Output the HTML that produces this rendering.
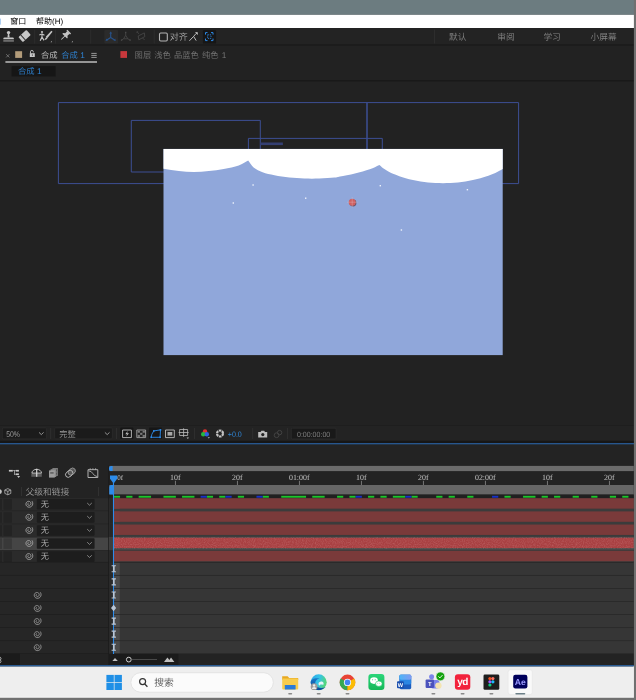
<!DOCTYPE html>
<html lang="zh-CN"><head><meta charset="utf-8"><title>After Effects</title>
<style>
html,body{margin:0;padding:0;background:#222;overflow:hidden}
svg{display:block;position:absolute;left:0;top:0;will-change:transform}
text{text-rendering:geometricPrecision;white-space:pre;font-weight:350}
</style></head><body>
<svg width="636" height="700" viewBox="0 0 636 700">
<rect x="0" y="0" width="636" height="700" fill="#222222" />
<rect x="0" y="0" width="636" height="14.8" fill="#6c7c80" />
<rect x="0" y="14.8" width="634" height="13.2" fill="#ffffff" />
<rect x="0" y="28" width="634" height="16.6" fill="#232323" />
<rect x="0" y="44.6" width="634" height="1" fill="#161616" />
<rect x="0" y="45.6" width="634" height="34.8" fill="#222222" />
<rect x="0" y="80.4" width="634" height="0.9" fill="#141414" />
<rect x="0" y="18.6" width="0.8" height="6" fill="#9cc4ee" />
<text x="10.3" y="24.3" font-size="8" fill="#000" font-family="'Liberation Sans','Noto Sans CJK SC',sans-serif" style="font-weight:400">窗口</text>
<text x="36" y="24.3" font-size="8" fill="#000" font-family="'Liberation Sans','Noto Sans CJK SC',sans-serif" style="font-weight:400">帮助(H)</text>
<text x="449" y="39.8" font-size="8.7" fill="#868686" font-family="'Liberation Sans','Noto Sans CJK SC',sans-serif" >默认</text>
<text x="497.2" y="39.8" font-size="8.7" fill="#868686" font-family="'Liberation Sans','Noto Sans CJK SC',sans-serif" >审阅</text>
<text x="543.4" y="39.8" font-size="8.7" fill="#868686" font-family="'Liberation Sans','Noto Sans CJK SC',sans-serif" >学习</text>
<text x="590.6" y="39.8" font-size="8.7" fill="#868686" font-family="'Liberation Sans','Noto Sans CJK SC',sans-serif" >小屏幕</text>
<rect x="434" y="29.5" width="0.7" height="14" fill="#333" />
<circle cx="8.55" cy="32.6" r="1.7" fill="#c6c6c6"/>
<path d="M7.95 33.6 h1.2 l0.5 3.9 h-2.2 z" fill="#c6c6c6" stroke="none" stroke-width="1" />
<path d="M3.3 39.3 v-0.6 a1.3 1.3 0 0 1 1.3 -1.3 h8 a1.3 1.3 0 0 1 1.3 1.3 v0.6 z" fill="#c6c6c6" stroke="none" stroke-width="1" />
<rect x="3.3" y="40.5" width="10.6" height="0.9" fill="#b4b4b4" />
<g transform="rotate(-42 24.6 36)"><rect x="19.2" y="32.6" width="10.8" height="6.8" rx="1" fill="#c6c6c6"/><rect x="22" y="32.2" width="0.9" height="7.6" fill="#232323"/></g>
<rect x="34.4" y="29.6" width="0.7" height="14" fill="#303030" />
<circle cx="42" cy="32" r="1.1" fill="#c6c6c6"/>
<path d="M39.4 35 l2.6 -1.2 l2.4 1.4 M42 33.4 v3.6 l-1.8 3.8 M42 37 l2 3.4" fill="none" stroke="#c6c6c6" stroke-width="1.15" />
<path d="M51.4 30.8 l1.1 1 l-5 6.2 l-1.7 -1.3 z" fill="#c6c6c6" stroke="none" stroke-width="1" />
<path d="M46.4 37 l1.2 1 c-0.8 1.6 -2.2 2 -3.4 1.8 c1 -0.6 1 -2 2.2 -2.8 z" fill="#c6c6c6" stroke="none" stroke-width="1" />
<path d="M50.4 42.3 h1.6 v-1.6 z" fill="#9a9a9a" stroke="none" stroke-width="1" />
<rect x="55.2" y="29.6" width="0.7" height="14" fill="#303030" />
<g transform="rotate(45 65.4 35.4)"><rect x="62.8" y="30" width="5.2" height="1.4" fill="#c6c6c6"/><rect x="63.7" y="31.2" width="3.4" height="3.4" fill="#c6c6c6"/><path d="M62 36.4 a3.4 2.2 0 0 1 6.8 0 z" fill="#c6c6c6"/><rect x="65" y="36.2" width="0.9" height="5" fill="#c6c6c6"/></g>
<path d="M71.4 42.3 h1.6 v-1.6 z" fill="#9a9a9a" stroke="none" stroke-width="1" />
<rect x="90.4" y="29.6" width="0.7" height="14" fill="#303030" />
<rect x="104.3" y="30" width="13.8" height="13.4" fill="#2b2b2b" rx="1"/>
<path d="M110.7 33 V37.5 L106.8 40 M110.7 37.5 L114.6 40" fill="none" stroke="#27528a" stroke-width="1.1" />
<path d="M110.7 31.6 l1.5 2 h-3 z M105.6 40.9 l0.6 -2.3 l1.7 2 z M115.8 40.9 l-0.6 -2.3 l-1.7 2 z" fill="#27528a" stroke="none" stroke-width="1" />
<path d="M125.7 32.6 V35.3 M123.6 38.8 L121.7 40 M127.8 38.8 L129.9 40 M125.7 35.3 L123.6 38.8 H127.8 Z" fill="none" stroke="#4a4a4a" stroke-width="0.8" />
<rect x="125" y="31.8" width="1.4" height="1.4" fill="#4a4a4a" />
<rect x="120.9" y="39.4" width="1.4" height="1.4" fill="#4a4a4a" />
<rect x="129.4" y="39.4" width="1.4" height="1.4" fill="#4a4a4a" />
<path d="M137.2 32 L139 33.8 M138.2 36 L144.3 32.9 L144.8 36.6 L138.8 39.8 Z M142.6 38 L144.6 40" fill="none" stroke="#4a4a4a" stroke-width="0.8" />
<path d="M136.6 31.4 h1.8 l-1.8 1.8 z" fill="#4a4a4a" stroke="none" stroke-width="1" />
<rect x="153.8" y="29.6" width="0.7" height="14" fill="#303030" />
<rect x="159.5" y="33" width="7.8" height="8" fill="none" rx="1.2" stroke="#b4b4b4" stroke-width="1.1"/>
<text x="169.8" y="39.8" font-size="9" fill="#a8a8a8" font-family="'Liberation Sans','Noto Sans CJK SC',sans-serif" >对齐</text>
<path d="M189.4 40.8 L193.6 36.4 L196.2 40.6 M193.6 36.4 L196 33.6" fill="none" stroke="#c2c2c2" stroke-width="0.95" />
<path d="M195 32.2 h2.7 v2.7 z" fill="#d8d8d8" stroke="none" stroke-width="1" />
<rect x="202.9" y="30" width="13.2" height="13.6" fill="#161616" rx="1.2"/>
<path d="M205.5 34.6 v-2 h2 M211 32.6 h2 v2 M213 38.6 v2 h-2 M207.5 40.6 h-2 v-2" fill="none" stroke="#2d8ceb" stroke-width="1" />
<path d="M207.6 34.8 h3.4 v3.6 h-3.4 z" fill="none" stroke="#2d8ceb" stroke-width="0.8" stroke-dasharray="1.3 0.9"/>
<path d="M6.2 54.2 L9.4 57.4 M9.4 54.2 L6.2 57.4" fill="none" stroke="#8a8a8a" stroke-width="0.7" />
<rect x="15.2" y="51.2" width="6.9" height="6.7" fill="#b39c7a" />
<path d="M30.5 53.6 v-1.8 a1.4 1.4 0 0 1 2.8 0 v0.6" fill="none" stroke="#c8c8c8" stroke-width="0.9" />
<rect x="29.8" y="53.2" width="5" height="3.8" fill="#c8c8c8" />
<rect x="31.9" y="54.4" width="0.8" height="1.4" fill="#333" />
<text x="41" y="58.1" font-size="8.3" fill="#c8c8c8" font-family="'Liberation Sans','Noto Sans CJK SC',sans-serif" >合成</text>
<text x="61.3" y="58.1" font-size="8.3" fill="#2f86d8" font-family="'Liberation Sans','Noto Sans CJK SC',sans-serif" >合成 1</text>
<path d="M91.3 53.4 h5.4 M91.3 55.4 h5.4 M91.3 57.4 h5.4" fill="none" stroke="#b8b8b8" stroke-width="0.8" />
<rect x="5.4" y="61.2" width="91.6" height="1.6" fill="#b4b4b4" />
<rect x="120.4" y="51.1" width="6.6" height="6.8" fill="#c8383c" />
<text x="134.6" y="58.1" font-size="8.3" fill="#767676" font-family="'Liberation Sans','Noto Sans CJK SC',sans-serif" word-spacing="0.8">图层 浅色 品蓝色 纯色 1</text>
<rect x="11.6" y="66.2" width="44" height="10.3" fill="#161616" />
<text x="18" y="74.1" font-size="8.3" fill="#2f86d8" font-family="'Liberation Sans','Noto Sans CJK SC',sans-serif" >合成 1</text>
<path d="M58.4 102.6 H367 V183.6 H58.4 Z" fill="none" stroke="#3d4f94" stroke-width="1" />
<path d="M367 102.6 H518.6 V183.6 H367 Z" fill="none" stroke="#3d4f94" stroke-width="1" />
<path d="M131.3 120.4 H260.3 V172 H131.3 Z" fill="none" stroke="#3d4f94" stroke-width="1" />
<path d="M248.4 138.4 H382.3 V160 H248.4 Z" fill="none" stroke="#3d4f94" stroke-width="1" />
<rect x="260.3" y="142.5" width="22.6" height="2.6" fill="#343f72" />
<rect x="163.5" y="148.9" width="339.2" height="206.2" fill="#90a7da" />
<path d="M163.5 148.9 V168.7C168.6 169.5 173.8 170.5 178.9 171.1C184.0 171.7 188.8 172.0 193.8 172.0C198.8 172.0 203.8 171.6 208.8 171.1C213.8 170.6 218.7 169.9 223.7 169.0C228.7 168.1 234.6 166.8 238.7 165.4C242.8 164.0 245.0 162.2 248.2 160.6C250.0 162.9 251.2 165.6 253.6 167.5C256.0 169.4 259.1 171.0 262.6 172.3C266.1 173.6 270.0 174.4 274.5 175.3C279.0 176.2 284.4 177.1 289.4 177.6C294.4 178.1 299.4 178.3 304.4 178.5C309.4 178.7 314.3 178.7 319.3 178.5C324.3 178.3 330.9 177.9 334.3 177.6C337.8 177.3 336.6 177.2 340.0 176.5C343.4 175.8 349.9 174.7 354.9 173.5C359.9 172.3 365.7 170.7 369.8 169.3C373.9 167.9 376.2 166.4 379.4 164.9C381.2 166.4 382.4 167.8 384.8 169.3C387.2 170.8 390.2 172.6 393.7 174.1C397.2 175.6 401.2 177.0 405.7 178.2C410.2 179.4 415.6 180.7 420.6 181.5C425.6 182.3 430.5 182.8 435.5 183.0C440.5 183.2 445.5 183.2 450.5 183.0C455.5 182.8 460.4 182.3 465.4 181.5C470.4 180.7 475.4 179.6 480.4 178.2C485.4 176.8 491.6 174.4 495.3 172.9C499.0 171.4 500.2 170.4 502.7 169.1V148.9Z" fill="#ffffff" stroke="none" stroke-width="1" />
<rect x="252.4" y="184.3" width="1.4" height="1.4" fill="#eef2fb" />
<rect x="232.6" y="202.3" width="1.4" height="1.4" fill="#eef2fb" />
<rect x="305" y="197.5" width="1.4" height="1.4" fill="#eef2fb" />
<rect x="379.6" y="185" width="1.4" height="1.4" fill="#eef2fb" />
<rect x="466.7" y="189" width="1.4" height="1.4" fill="#eef2fb" />
<rect x="400.7" y="229.3" width="1.4" height="1.4" fill="#eef2fb" />
<circle cx="353" cy="203" r="3.4" fill="#5a3038" opacity="0.7"/>
<circle cx="352.2" cy="202.2" r="3.5" fill="#cf5f60"/>
<path d="M347 202.2 H357.6 M352.2 197 V207.6" fill="none" stroke="#e9c9cf" stroke-width="0.6" opacity="0.55"/>
<rect x="0" y="425.1" width="634" height="0.7" fill="#1c1c1c" />
<rect x="0" y="425.8" width="634" height="15" fill="#232323" />
<rect x="2.3" y="427.9" width="44.1" height="11" fill="#1b1b1b" rx="1" stroke="#303030" stroke-width="0.6"/>
<text x="6.2" y="436.8" font-size="8.2" fill="#9c9c9c" font-family="'Liberation Sans','Noto Sans CJK SC',sans-serif" textLength="13.8" lengthAdjust="spacingAndGlyphs">50%</text>
<path d="M39.0 432.4 l2.3 2.2 l2.3 -2.2" fill="none" stroke="#a0a0a0" stroke-width="0.9" />
<rect x="54.7" y="427.9" width="57.6" height="11" fill="#1b1b1b" rx="1" stroke="#303030" stroke-width="0.6"/>
<text x="59.3" y="436.8" font-size="8.2" fill="#9c9c9c" font-family="'Liberation Sans','Noto Sans CJK SC',sans-serif" >完整</text>
<path d="M104.89999999999999 432.4 l2.3 2.2 l2.3 -2.2" fill="none" stroke="#a0a0a0" stroke-width="0.9" />
<rect x="50.4" y="428" width="0.7" height="11" fill="#343434" />
<rect x="116" y="428" width="0.7" height="11" fill="#343434" />
<rect x="194.2" y="428" width="0.7" height="11" fill="#343434" />
<rect x="252.4" y="428" width="0.7" height="11" fill="#343434" />
<rect x="287.3" y="428" width="0.7" height="11" fill="#343434" />
<rect x="120.2" y="427.6" width="13.2" height="11.4" fill="#161616" rx="1"/>
<rect x="149" y="427.6" width="13" height="11.4" fill="#161616" rx="1"/>
<path d="M122.6 430 h8.8 v7.6 h-8.8 z" fill="none" stroke="#bdbdbd" stroke-width="0.9" />
<path d="M127.6 431 l-2.3 3.2 h1.8 l-1 2.6 l2.9 -3.6 h-1.8 z" fill="#bdbdbd" stroke="none" stroke-width="1" />
<path d="M136.8 430 h8.8 v7.6 h-8.8 z" fill="none" stroke="#a0a0a0" stroke-width="0.9" />
<rect x="137.6" y="430.7" width="2.3" height="2" fill="#7c7c7c" />
<rect x="137.6" y="434.9" width="2.3" height="2" fill="#7c7c7c" />
<rect x="140.1" y="432.8" width="2.3" height="2" fill="#7c7c7c" />
<rect x="142.6" y="430.7" width="2.3" height="2" fill="#7c7c7c" />
<rect x="142.6" y="434.9" width="2.3" height="2" fill="#7c7c7c" />
<path d="M153.8 430.9 L160.5 429.9 L160.1 437.3 L151.2 437.3 L151.9 434.2 Z" fill="none" stroke="#2d8ceb" stroke-width="0.9" />
<rect x="153" y="430.1" width="1.6" height="1.6" fill="#2d8ceb" />
<rect x="159.7" y="429.1" width="1.6" height="1.6" fill="#2d8ceb" />
<rect x="159.3" y="436.5" width="1.6" height="1.6" fill="#2d8ceb" />
<rect x="150.4" y="436.5" width="1.6" height="1.6" fill="#2d8ceb" />
<path d="M165.5 430 h8.8 v7.6 h-8.8 z" fill="none" stroke="#bdbdbd" stroke-width="0.9" stroke-linejoin="round"/>
<rect x="167.5" y="432" width="4.8" height="3.6" fill="#a8a8a8" />
<path d="M179.6 429.5 h8 v6 h-8 z M183.6 428.3 v8.6 M178.6 432.5 h10" fill="none" stroke="#bdbdbd" stroke-width="0.8" />
<path d="M186.6 437.6 h2.4 l-1.2 1.4 z" fill="#bdbdbd" stroke="none" stroke-width="1" />
<circle cx="205" cy="431.5" r="2.2" fill="#e03030"/><circle cx="203.2" cy="434.3" r="2.2" fill="#28b83c"/><circle cx="206.8" cy="434.3" r="2.2" fill="#3060e0"/>
<path d="M207.6 437.2 h2.4 l-1.2 1.3 z" fill="#bdbdbd" stroke="none" stroke-width="1" />
<circle cx="220" cy="433.5" r="3.0" fill="none" stroke="#c4c4c4" stroke-width="2.2" stroke-dasharray="2.5 0.65"/>
<text x="227.8" y="436.9" font-size="8" fill="#2f86d8" font-family="'Liberation Sans','Noto Sans CJK SC',sans-serif" textLength="14" lengthAdjust="spacingAndGlyphs">+0.0</text>
<path d="M258.2 432 h2.4 l0.8 -1.2 h2.8 l0.8 1.2 h2.2 v5.4 h-9 z" fill="#bdbdbd" stroke="none" stroke-width="1" />
<circle cx="262.8" cy="434.6" r="1.6" fill="#232323"/>
<circle cx="279.6" cy="432.6" r="2.2" fill="none" stroke="#454545" stroke-width="0.9"/><circle cx="276.6" cy="435.2" r="2.4" fill="none" stroke="#454545" stroke-width="0.9"/>
<rect x="291.3" y="428.2" width="44.8" height="10.8" fill="#191919" rx="1" stroke="#2d2d2d" stroke-width="0.8"/>
<text x="297" y="436.7" font-size="7.4" fill="#7e7e7e" font-family="'Liberation Sans','Noto Sans CJK SC',sans-serif" textLength="33.2" lengthAdjust="spacingAndGlyphs">0:00:00:00</text>
<rect x="0" y="440.8" width="634" height="2.2" fill="#161616" />
<rect x="0" y="443" width="634" height="1.6" fill="#27568e" />
<rect x="0" y="444.6" width="634" height="222" fill="#232323" />
<rect x="0" y="497.8" width="108.4" height="13" fill="#2b2b2b" />
<rect x="0" y="497.8" width="108.4" height="0.5" fill="#262626" />
<rect x="-3" y="499.1" width="5" height="10.6" fill="#232323" />
<rect x="3.5" y="499.1" width="8.4" height="10.6" fill="#232323" />
<rect x="36.8" y="499" width="57.8" height="10.6" fill="#1d1d1d" rx="0.8"/>
<text x="40.8" y="507" font-size="8.2" fill="#bcbcbc" font-family="'Liberation Sans','Noto Sans CJK SC',sans-serif" >无</text>
<path d="M87.2 503.0 l2.3 2.2 l2.3 -2.2" fill="none" stroke="#9a9a9a" stroke-width="0.8" />
<path d="M28.19 503.25 L28.03 503.39 L27.89 503.58 L27.81 503.81 L27.77 504.07 L27.80 504.34 L27.90 504.61 L28.06 504.86 L28.29 505.08 L28.57 505.24 L28.89 505.35 L29.25 505.37 L29.62 505.31 L29.97 505.17 L30.30 504.94 L30.57 504.63 L30.78 504.26 L30.90 503.83 L30.92 503.38 L30.84 502.92 L30.64 502.47 L30.35 502.07 L29.96 501.74 L29.50 501.49 L28.97 501.35 L28.42 501.33 L27.86 501.44 L27.33 501.68 L26.85 502.03 L26.45 502.50 L26.16 503.05 L26.00 503.67 L25.98 504.33 L26.11 504.99 L26.39 505.61 L26.81 506.17 L27.35 506.63 L27.99 506.96 L28.71 507.15 L29.47 507.17 L30.22 507.02 L30.94 506.71 L31.58 506.23 L32.10 505.61 L32.48 504.88 L32.70 504.06 L32.73 503.21 L32.56 502.36 L32.21 501.55" fill="none" stroke="#b0b0b0" stroke-width="0.85" stroke-linecap="round" stroke-linejoin="round"/>
<rect x="108.4" y="497.8" width="5" height="13" fill="#272727" />
<rect x="0" y="510.87" width="108.4" height="13" fill="#2b2b2b" />
<rect x="0" y="510.87" width="108.4" height="0.5" fill="#262626" />
<rect x="-3" y="512.17" width="5" height="10.6" fill="#232323" />
<rect x="3.5" y="512.17" width="8.4" height="10.6" fill="#232323" />
<rect x="36.8" y="512.07" width="57.8" height="10.6" fill="#1d1d1d" rx="0.8"/>
<text x="40.8" y="520.07" font-size="8.2" fill="#bcbcbc" font-family="'Liberation Sans','Noto Sans CJK SC',sans-serif" >无</text>
<path d="M87.2 516.07 l2.3 2.2 l2.3 -2.2" fill="none" stroke="#9a9a9a" stroke-width="0.8" />
<path d="M28.19 516.32 L28.03 516.46 L27.89 516.65 L27.81 516.88 L27.77 517.14 L27.80 517.41 L27.90 517.68 L28.06 517.93 L28.29 518.15 L28.57 518.31 L28.89 518.42 L29.25 518.44 L29.62 518.38 L29.97 518.24 L30.30 518.01 L30.57 517.70 L30.78 517.33 L30.90 516.90 L30.92 516.45 L30.84 515.99 L30.64 515.54 L30.35 515.14 L29.96 514.81 L29.50 514.56 L28.97 514.42 L28.42 514.40 L27.86 514.51 L27.33 514.75 L26.85 515.10 L26.45 515.57 L26.16 516.12 L26.00 516.74 L25.98 517.40 L26.11 518.06 L26.39 518.68 L26.81 519.24 L27.35 519.70 L27.99 520.03 L28.71 520.22 L29.47 520.24 L30.22 520.09 L30.94 519.78 L31.58 519.30 L32.10 518.68 L32.48 517.95 L32.70 517.13 L32.73 516.28 L32.56 515.43 L32.21 514.62" fill="none" stroke="#b0b0b0" stroke-width="0.85" stroke-linecap="round" stroke-linejoin="round"/>
<rect x="108.4" y="510.87" width="5" height="13" fill="#272727" />
<rect x="0" y="523.94" width="108.4" height="13" fill="#2b2b2b" />
<rect x="0" y="523.94" width="108.4" height="0.5" fill="#262626" />
<rect x="-3" y="525.24" width="5" height="10.6" fill="#232323" />
<rect x="3.5" y="525.24" width="8.4" height="10.6" fill="#232323" />
<rect x="36.8" y="525.14" width="57.8" height="10.6" fill="#1d1d1d" rx="0.8"/>
<text x="40.8" y="533.14" font-size="8.2" fill="#bcbcbc" font-family="'Liberation Sans','Noto Sans CJK SC',sans-serif" >无</text>
<path d="M87.2 529.1400000000001 l2.3 2.2 l2.3 -2.2" fill="none" stroke="#9a9a9a" stroke-width="0.8" />
<path d="M28.19 529.39 L28.03 529.53 L27.89 529.72 L27.81 529.95 L27.77 530.21 L27.80 530.48 L27.90 530.75 L28.06 531.00 L28.29 531.22 L28.57 531.38 L28.89 531.49 L29.25 531.51 L29.62 531.45 L29.97 531.31 L30.30 531.08 L30.57 530.77 L30.78 530.40 L30.90 529.97 L30.92 529.52 L30.84 529.06 L30.64 528.61 L30.35 528.21 L29.96 527.88 L29.50 527.63 L28.97 527.49 L28.42 527.47 L27.86 527.58 L27.33 527.82 L26.85 528.17 L26.45 528.64 L26.16 529.19 L26.00 529.81 L25.98 530.47 L26.11 531.13 L26.39 531.75 L26.81 532.31 L27.35 532.77 L27.99 533.10 L28.71 533.29 L29.47 533.31 L30.22 533.16 L30.94 532.85 L31.58 532.37 L32.10 531.75 L32.48 531.02 L32.70 530.20 L32.73 529.35 L32.56 528.50 L32.21 527.69" fill="none" stroke="#b0b0b0" stroke-width="0.85" stroke-linecap="round" stroke-linejoin="round"/>
<rect x="108.4" y="523.94" width="5" height="13" fill="#272727" />
<rect x="0" y="537.01" width="108.4" height="13" fill="#454545" />
<rect x="0" y="537.01" width="108.4" height="0.5" fill="#262626" />
<rect x="-3" y="538.31" width="5" height="10.6" fill="#383838" />
<rect x="3.5" y="538.31" width="8.4" height="10.6" fill="#383838" />
<rect x="36.8" y="538.21" width="57.8" height="10.6" fill="#1d1d1d" rx="0.8"/>
<text x="40.8" y="546.21" font-size="8.2" fill="#bcbcbc" font-family="'Liberation Sans','Noto Sans CJK SC',sans-serif" >无</text>
<path d="M87.2 542.21 l2.3 2.2 l2.3 -2.2" fill="none" stroke="#9a9a9a" stroke-width="0.8" />
<path d="M28.19 542.46 L28.03 542.60 L27.89 542.79 L27.81 543.02 L27.77 543.28 L27.80 543.55 L27.90 543.82 L28.06 544.07 L28.29 544.29 L28.57 544.45 L28.89 544.56 L29.25 544.58 L29.62 544.52 L29.97 544.38 L30.30 544.15 L30.57 543.84 L30.78 543.47 L30.90 543.04 L30.92 542.59 L30.84 542.13 L30.64 541.68 L30.35 541.28 L29.96 540.95 L29.50 540.70 L28.97 540.56 L28.42 540.54 L27.86 540.65 L27.33 540.89 L26.85 541.24 L26.45 541.71 L26.16 542.26 L26.00 542.88 L25.98 543.54 L26.11 544.20 L26.39 544.82 L26.81 545.38 L27.35 545.84 L27.99 546.17 L28.71 546.36 L29.47 546.38 L30.22 546.23 L30.94 545.92 L31.58 545.44 L32.10 544.82 L32.48 544.09 L32.70 543.27 L32.73 542.42 L32.56 541.57 L32.21 540.76" fill="none" stroke="#b0b0b0" stroke-width="0.85" stroke-linecap="round" stroke-linejoin="round"/>
<rect x="108.4" y="537.01" width="5" height="13" fill="#3e3e3e" />
<rect x="0" y="550.08" width="108.4" height="13" fill="#2b2b2b" />
<rect x="0" y="550.08" width="108.4" height="0.5" fill="#262626" />
<rect x="-3" y="551.38" width="5" height="10.6" fill="#232323" />
<rect x="3.5" y="551.38" width="8.4" height="10.6" fill="#232323" />
<rect x="36.8" y="551.28" width="57.8" height="10.6" fill="#1d1d1d" rx="0.8"/>
<text x="40.8" y="559.28" font-size="8.2" fill="#bcbcbc" font-family="'Liberation Sans','Noto Sans CJK SC',sans-serif" >无</text>
<path d="M87.2 555.2800000000001 l2.3 2.2 l2.3 -2.2" fill="none" stroke="#9a9a9a" stroke-width="0.8" />
<path d="M28.19 555.53 L28.03 555.67 L27.89 555.86 L27.81 556.09 L27.77 556.35 L27.80 556.62 L27.90 556.89 L28.06 557.14 L28.29 557.36 L28.57 557.52 L28.89 557.63 L29.25 557.65 L29.62 557.59 L29.97 557.45 L30.30 557.22 L30.57 556.91 L30.78 556.54 L30.90 556.11 L30.92 555.66 L30.84 555.20 L30.64 554.75 L30.35 554.35 L29.96 554.02 L29.50 553.77 L28.97 553.63 L28.42 553.61 L27.86 553.72 L27.33 553.96 L26.85 554.31 L26.45 554.78 L26.16 555.33 L26.00 555.95 L25.98 556.61 L26.11 557.27 L26.39 557.89 L26.81 558.45 L27.35 558.91 L27.99 559.24 L28.71 559.43 L29.47 559.45 L30.22 559.30 L30.94 558.99 L31.58 558.51 L32.10 557.89 L32.48 557.16 L32.70 556.34 L32.73 555.49 L32.56 554.64 L32.21 553.83" fill="none" stroke="#b0b0b0" stroke-width="0.85" stroke-linecap="round" stroke-linejoin="round"/>
<rect x="108.4" y="550.08" width="5" height="13" fill="#272727" />
<rect x="0" y="562.6" width="108.4" height="91.4" fill="#262626" />
<rect x="0" y="561.9" width="108.4" height="0.7" fill="#1e1e1e" />
<rect x="0" y="574.97" width="108.4" height="0.7" fill="#1e1e1e" />
<rect x="0" y="588.04" width="108.4" height="0.7" fill="#1e1e1e" />
<rect x="0" y="601.11" width="108.4" height="0.7" fill="#1e1e1e" />
<rect x="0" y="614.18" width="108.4" height="0.7" fill="#1e1e1e" />
<rect x="0" y="627.25" width="108.4" height="0.7" fill="#1e1e1e" />
<rect x="0" y="640.32" width="108.4" height="0.7" fill="#1e1e1e" />
<rect x="0" y="653.39" width="108.4" height="0.7" fill="#1e1e1e" />
<path d="M36.49 594.39 L36.33 594.53 L36.19 594.72 L36.11 594.95 L36.07 595.21 L36.10 595.48 L36.20 595.75 L36.36 596.00 L36.59 596.22 L36.87 596.38 L37.19 596.49 L37.55 596.51 L37.92 596.45 L38.27 596.31 L38.60 596.08 L38.87 595.77 L39.08 595.40 L39.20 594.97 L39.22 594.52 L39.14 594.06 L38.94 593.61 L38.65 593.21 L38.26 592.88 L37.80 592.63 L37.27 592.49 L36.72 592.47 L36.16 592.58 L35.63 592.82 L35.15 593.17 L34.75 593.64 L34.46 594.19 L34.30 594.81 L34.28 595.47 L34.41 596.13 L34.69 596.75 L35.11 597.31 L35.65 597.77 L36.29 598.10 L37.01 598.29 L37.77 598.31 L38.52 598.16 L39.24 597.85 L39.88 597.37 L40.40 596.75 L40.78 596.02 L41.00 595.20 L41.03 594.35 L40.86 593.50 L40.51 592.69" fill="none" stroke="#a4a4a4" stroke-width="0.85" stroke-linecap="round" stroke-linejoin="round"/>
<path d="M36.49 607.46 L36.33 607.60 L36.19 607.79 L36.11 608.02 L36.07 608.28 L36.10 608.55 L36.20 608.82 L36.36 609.07 L36.59 609.29 L36.87 609.45 L37.19 609.56 L37.55 609.58 L37.92 609.52 L38.27 609.38 L38.60 609.15 L38.87 608.84 L39.08 608.47 L39.20 608.04 L39.22 607.59 L39.14 607.13 L38.94 606.68 L38.65 606.28 L38.26 605.95 L37.80 605.70 L37.27 605.56 L36.72 605.54 L36.16 605.65 L35.63 605.89 L35.15 606.24 L34.75 606.71 L34.46 607.26 L34.30 607.88 L34.28 608.54 L34.41 609.20 L34.69 609.82 L35.11 610.38 L35.65 610.84 L36.29 611.17 L37.01 611.36 L37.77 611.38 L38.52 611.23 L39.24 610.92 L39.88 610.44 L40.40 609.82 L40.78 609.09 L41.00 608.27 L41.03 607.42 L40.86 606.57 L40.51 605.76" fill="none" stroke="#a4a4a4" stroke-width="0.85" stroke-linecap="round" stroke-linejoin="round"/>
<path d="M36.49 620.53 L36.33 620.67 L36.19 620.86 L36.11 621.09 L36.07 621.35 L36.10 621.62 L36.20 621.89 L36.36 622.14 L36.59 622.36 L36.87 622.52 L37.19 622.63 L37.55 622.65 L37.92 622.59 L38.27 622.45 L38.60 622.22 L38.87 621.91 L39.08 621.54 L39.20 621.11 L39.22 620.66 L39.14 620.20 L38.94 619.75 L38.65 619.35 L38.26 619.02 L37.80 618.77 L37.27 618.63 L36.72 618.61 L36.16 618.72 L35.63 618.96 L35.15 619.31 L34.75 619.78 L34.46 620.33 L34.30 620.95 L34.28 621.61 L34.41 622.27 L34.69 622.89 L35.11 623.45 L35.65 623.91 L36.29 624.24 L37.01 624.43 L37.77 624.45 L38.52 624.30 L39.24 623.99 L39.88 623.51 L40.40 622.89 L40.78 622.16 L41.00 621.34 L41.03 620.49 L40.86 619.64 L40.51 618.83" fill="none" stroke="#a4a4a4" stroke-width="0.85" stroke-linecap="round" stroke-linejoin="round"/>
<path d="M36.49 633.60 L36.33 633.74 L36.19 633.93 L36.11 634.16 L36.07 634.42 L36.10 634.69 L36.20 634.96 L36.36 635.21 L36.59 635.43 L36.87 635.59 L37.19 635.70 L37.55 635.72 L37.92 635.66 L38.27 635.52 L38.60 635.29 L38.87 634.98 L39.08 634.61 L39.20 634.18 L39.22 633.73 L39.14 633.27 L38.94 632.82 L38.65 632.42 L38.26 632.09 L37.80 631.84 L37.27 631.70 L36.72 631.68 L36.16 631.79 L35.63 632.03 L35.15 632.38 L34.75 632.85 L34.46 633.40 L34.30 634.02 L34.28 634.68 L34.41 635.34 L34.69 635.96 L35.11 636.52 L35.65 636.98 L36.29 637.31 L37.01 637.50 L37.77 637.52 L38.52 637.37 L39.24 637.06 L39.88 636.58 L40.40 635.96 L40.78 635.23 L41.00 634.41 L41.03 633.56 L40.86 632.71 L40.51 631.90" fill="none" stroke="#a4a4a4" stroke-width="0.85" stroke-linecap="round" stroke-linejoin="round"/>
<path d="M36.49 646.67 L36.33 646.81 L36.19 647.00 L36.11 647.23 L36.07 647.49 L36.10 647.76 L36.20 648.03 L36.36 648.28 L36.59 648.50 L36.87 648.66 L37.19 648.77 L37.55 648.79 L37.92 648.73 L38.27 648.59 L38.60 648.36 L38.87 648.05 L39.08 647.68 L39.20 647.25 L39.22 646.80 L39.14 646.34 L38.94 645.89 L38.65 645.49 L38.26 645.16 L37.80 644.91 L37.27 644.77 L36.72 644.75 L36.16 644.86 L35.63 645.10 L35.15 645.45 L34.75 645.92 L34.46 646.47 L34.30 647.09 L34.28 647.75 L34.41 648.41 L34.69 649.03 L35.11 649.59 L35.65 650.05 L36.29 650.38 L37.01 650.57 L37.77 650.59 L38.52 650.44 L39.24 650.13 L39.88 649.65 L40.40 649.03 L40.78 648.30 L41.00 647.48 L41.03 646.63 L40.86 645.78 L40.51 644.97" fill="none" stroke="#a4a4a4" stroke-width="0.85" stroke-linecap="round" stroke-linejoin="round"/>
<text x="25.4" y="495.4" font-size="8.8" fill="#9a9a9a" font-family="'Liberation Sans','Noto Sans CJK SC',sans-serif" >父级和链接</text>
<rect x="21.3" y="487" width="0.7" height="9" fill="#383838" />
<rect x="98" y="487" width="0.7" height="9" fill="#383838" />
<circle cx="-0.6" cy="491.6" r="2.4" fill="#c4c4c4"/>
<path d="M7.8 488.6 l3 1.4 v3.4 l-3 1.4 l-3 -1.4 v-3.4 z M4.8 490 l3 1.4 l3 -1.4 M7.8 491.4 v3.4" fill="none" stroke="#c4c4c4" stroke-width="0.7" />
<rect x="8.9" y="469.9" width="3.9" height="1.7" fill="#c8c8c8" />
<rect x="12.8" y="470" width="2.9" height="0.7" fill="#a8a8a8" />
<rect x="14" y="470" width="0.8" height="4.7" fill="#b0b0b0" />
<rect x="14" y="473.9" width="1.7" height="0.7" fill="#a8a8a8" />
<rect x="15.7" y="469.9" width="3.2" height="1.7" fill="#c8c8c8" />
<rect x="15.7" y="473.4" width="3.2" height="1.7" fill="#c8c8c8" />
<path d="M17.1 476.1 h3 l-1.5 1.8 z" fill="#c0c0c0" stroke="none" stroke-width="1" />
<rect x="31.3" y="473.4" width="10.5" height="3.4" fill="#5c5c5c" />
<path d="M31.9 473.1 a4.8 3.8 0 0 1 9.6 0 z" fill="none" stroke="#cfcfcf" stroke-width="0.9" />
<rect x="36.1" y="468.8" width="1.2" height="8" fill="#d8d8d8" />
<rect x="52.4" y="468" width="5.5" height="7.9" fill="#7c7c7c" />
<rect x="53.4" y="469.4" width="3.6" height="2.1" fill="#484848" />
<rect x="53.4" y="472.6" width="3.6" height="2.1" fill="#484848" />
<rect x="50.6" y="469.2" width="5.6" height="7.8" fill="#8a8a8a" />
<rect x="49" y="470.4" width="5.8" height="7.2" fill="#9c9c9c" />
<rect x="50.2" y="472" width="3.4" height="1.8" fill="#666" />
<ellipse cx="71.7" cy="471.6" rx="4.1" ry="3" fill="#585858" stroke="#9a9a9a" stroke-width="0.8" transform="rotate(-40 71.7 471.6)"/><ellipse cx="69.2" cy="473.8" rx="4.1" ry="2.9" fill="none" stroke="#b4b4b4" stroke-width="0.9" transform="rotate(-40 69.2 473.8)"/>
<path d="M88 469.7 h9.8 v7.8 h-9.8 z" fill="none" stroke="#c0c0c0" stroke-width="0.9" />
<path d="M88.6 470.8 c4.4 0 4.4 5.8 8.8 5.8" fill="none" stroke="#c0c0c0" stroke-width="0.8" />
<path d="M90.2 468.3 v1.4 M92.9 468.3 v1.4 M95.6 468.3 v1.4" fill="none" stroke="#c0c0c0" stroke-width="0.8" />
<rect x="108.4" y="465.6" width="0.9" height="200" fill="#1a1a1a" />
<rect x="109.3" y="465.9" width="524.5" height="5.2" fill="#6b6b6b" />
<path d="M112.6 465.9 h-1.2 a2.4 2.6 0 0 0 0 5.2 h1.2 z" fill="#2d8ceb" stroke="none" stroke-width="1" />
<rect x="112.95" y="480.8" width="0.8" height="4.2" fill="#8a8a8a" />
<text x="117.3" y="479.9" font-size="7" fill="#c4c4c4" font-family="'Liberation Serif','Noto Serif CJK SC',serif" >0f</text>
<rect x="174.95" y="480.8" width="0.8" height="4.2" fill="#8a8a8a" />
<text x="175.25" y="480.2" font-size="7.9" fill="#c4c4c4" font-family="'Liberation Serif','Noto Serif CJK SC',serif" text-anchor="middle">10f</text>
<rect x="236.95" y="480.8" width="0.8" height="4.2" fill="#8a8a8a" />
<text x="237.25" y="480.2" font-size="7.9" fill="#c4c4c4" font-family="'Liberation Serif','Noto Serif CJK SC',serif" text-anchor="middle">20f</text>
<rect x="298.95" y="480.8" width="0.8" height="4.2" fill="#8a8a8a" />
<text x="299.25" y="480.2" font-size="7.9" fill="#c4c4c4" font-family="'Liberation Serif','Noto Serif CJK SC',serif" text-anchor="middle">01:00f</text>
<rect x="360.95" y="480.8" width="0.8" height="4.2" fill="#8a8a8a" />
<text x="361.25" y="480.2" font-size="7.9" fill="#c4c4c4" font-family="'Liberation Serif','Noto Serif CJK SC',serif" text-anchor="middle">10f</text>
<rect x="422.95" y="480.8" width="0.8" height="4.2" fill="#8a8a8a" />
<text x="423.25" y="480.2" font-size="7.9" fill="#c4c4c4" font-family="'Liberation Serif','Noto Serif CJK SC',serif" text-anchor="middle">20f</text>
<rect x="484.95" y="480.8" width="0.8" height="4.2" fill="#8a8a8a" />
<text x="485.25" y="480.2" font-size="7.9" fill="#c4c4c4" font-family="'Liberation Serif','Noto Serif CJK SC',serif" text-anchor="middle">02:00f</text>
<rect x="546.95" y="480.8" width="0.8" height="4.2" fill="#8a8a8a" />
<text x="547.25" y="480.2" font-size="7.9" fill="#c4c4c4" font-family="'Liberation Serif','Noto Serif CJK SC',serif" text-anchor="middle">10f</text>
<rect x="608.95" y="480.8" width="0.8" height="4.2" fill="#8a8a8a" />
<text x="609.25" y="480.2" font-size="7.9" fill="#c4c4c4" font-family="'Liberation Serif','Noto Serif CJK SC',serif" text-anchor="middle">20f</text>
<rect x="109.3" y="485" width="524.5" height="9.6" fill="#666666" />
<path d="M113.6 485 h-2.3 a2 2 0 0 0 -2 2 v6.4 a2 2 0 0 0 2 2 h2.3 z" fill="#2d8ceb" stroke="none" stroke-width="1" />
<rect x="109.3" y="494.6" width="524.5" height="3.8" fill="#202020" />
<rect x="113.85" y="495.8" width="6.2" height="1.9" fill="#1cc52a" />
<rect x="126.25" y="495.8" width="6.2" height="1.9" fill="#1cc52a" />
<rect x="138.65" y="495.8" width="12.4" height="1.9" fill="#1cc52a" />
<rect x="163.45" y="495.8" width="12.4" height="1.9" fill="#1cc52a" />
<rect x="182.05" y="495.8" width="12.4" height="1.9" fill="#1cc52a" />
<rect x="206.85" y="495.8" width="6.2" height="1.9" fill="#1cc52a" />
<rect x="219.25" y="495.8" width="6.2" height="1.9" fill="#1cc52a" />
<rect x="237.85" y="495.8" width="6.2" height="1.9" fill="#1cc52a" />
<rect x="262.65" y="495.8" width="6.2" height="1.9" fill="#1cc52a" />
<rect x="281.25" y="495.8" width="24.8" height="1.9" fill="#1cc52a" />
<rect x="312.25" y="495.8" width="12.4" height="1.9" fill="#1cc52a" />
<rect x="337.05" y="495.8" width="6.2" height="1.9" fill="#1cc52a" />
<rect x="349.45" y="495.8" width="6.2" height="1.9" fill="#1cc52a" />
<rect x="368.05" y="495.8" width="6.2" height="1.9" fill="#1cc52a" />
<rect x="380.45" y="495.8" width="6.2" height="1.9" fill="#1cc52a" />
<rect x="392.85" y="495.8" width="12.4" height="1.9" fill="#1cc52a" />
<rect x="411.45" y="495.8" width="6.2" height="1.9" fill="#1cc52a" />
<rect x="436.25" y="495.8" width="6.2" height="1.9" fill="#1cc52a" />
<rect x="448.65" y="495.8" width="6.2" height="1.9" fill="#1cc52a" />
<rect x="467.25" y="495.8" width="6.2" height="1.9" fill="#1cc52a" />
<rect x="504.45" y="495.8" width="6.2" height="1.9" fill="#1cc52a" />
<rect x="523.05" y="495.8" width="12.4" height="1.9" fill="#1cc52a" />
<rect x="541.65" y="495.8" width="6.2" height="1.9" fill="#1cc52a" />
<rect x="554.05" y="495.8" width="6.2" height="1.9" fill="#1cc52a" />
<rect x="572.65" y="495.8" width="6.2" height="1.9" fill="#1cc52a" />
<rect x="591.25" y="495.8" width="6.2" height="1.9" fill="#1cc52a" />
<rect x="609.85" y="495.8" width="6.2" height="1.9" fill="#1cc52a" />
<rect x="622.25" y="495.8" width="6.2" height="1.9" fill="#1cc52a" />
<rect x="200.65" y="495.8" width="6.2" height="1.9" fill="#1830c8" />
<rect x="225.45" y="495.8" width="6.2" height="1.9" fill="#1830c8" />
<rect x="256.45" y="495.8" width="6.2" height="1.9" fill="#1830c8" />
<rect x="355.65" y="495.8" width="6.2" height="1.9" fill="#1830c8" />
<rect x="405.25" y="495.8" width="6.2" height="1.9" fill="#1830c8" />
<rect x="492.05" y="495.8" width="6.2" height="1.9" fill="#1830c8" />
<rect x="109.3" y="498.4" width="524.5" height="64.2" fill="#3b3b3b" />
<rect x="109.3" y="536.8" width="524.5" height="13" fill="#4b4b4b" />
<rect x="109.3" y="497.65" width="4.4" height="13" fill="#272727" />
<rect x="113.6" y="498.25" width="520.2" height="10.4" fill="#7a3a3a" />
<rect x="113.6" y="498.25" width="6.2" height="10.4" fill="#7d3c3c" />
<rect x="109.3" y="510.8" width="4.4" height="13" fill="#272727" />
<rect x="113.6" y="511.4" width="520.2" height="10.4" fill="#7a3a3a" />
<rect x="113.6" y="511.4" width="6.2" height="10.4" fill="#7d3c3c" />
<rect x="109.3" y="523.95" width="4.4" height="13" fill="#272727" />
<rect x="113.6" y="524.55" width="520.2" height="10.4" fill="#7a3a3a" />
<rect x="113.6" y="524.55" width="6.2" height="10.4" fill="#7d3c3c" />
<rect x="109.3" y="537.1" width="4.4" height="13" fill="#3e3e3e" />
<rect x="113.6" y="537.7" width="520.2" height="10.4" fill="#a94042" />
<rect x="113.6" y="537.7" width="6.2" height="10.4" fill="#ad4446" />
<rect x="109.3" y="550.25" width="4.4" height="13" fill="#272727" />
<rect x="113.6" y="550.85" width="520.2" height="10.4" fill="#7a3a3a" />
<rect x="113.6" y="550.85" width="6.2" height="10.4" fill="#7d3c3c" />
<defs><filter id="nz" x="0" y="0" width="100%" height="100%"><feTurbulence type="fractalNoise" baseFrequency="0.9" numOctaves="2" seed="3" result="n"/><feColorMatrix type="matrix" values="0 0 0 0 1  0 0 0 0 0.75  0 0 0 0 0.75  0.6 0 0 0 -0.22"/></filter></defs>
<rect x="113.6" y="537.7" width="520.2" height="10.4" fill="#fff" filter="url(#nz)" opacity="0.5"/>
<rect x="109.3" y="562.6" width="524.5" height="91.4" fill="#363636" />
<rect x="113.6" y="562.6" width="6.2" height="91.4" fill="#4a4a4a" />
<rect x="109.3" y="562.6" width="4.2" height="91.4" fill="#2a2a2a" />
<rect x="109.3" y="561.9" width="524.5" height="0.8" fill="#282828" />
<rect x="109.3" y="574.97" width="524.5" height="0.8" fill="#282828" />
<rect x="109.3" y="588.04" width="524.5" height="0.8" fill="#282828" />
<rect x="109.3" y="601.11" width="524.5" height="0.8" fill="#282828" />
<rect x="109.3" y="614.18" width="524.5" height="0.8" fill="#282828" />
<rect x="109.3" y="627.25" width="524.5" height="0.8" fill="#282828" />
<rect x="109.3" y="640.32" width="524.5" height="0.8" fill="#282828" />
<rect x="109.3" y="653.39" width="524.5" height="0.8" fill="#282828" />
<rect x="0" y="653.9" width="634" height="11.4" fill="#232323" />
<rect x="0" y="653.9" width="20" height="11.4" fill="#1b1b1b" />
<rect x="108.4" y="653.9" width="70" height="11.4" fill="#1b1b1b" />
<path d="M-1 657 q2 0 2 1.6 q0 1.4 -1.6 1.4 q1.6 0 1.6 1.4 q0 1.6 -2 1.6" fill="none" stroke="#c0c0c0" stroke-width="0.9" />
<path d="M112.4 661 l2.6 -3 l2.8 3 z" fill="#c0c0c0" stroke="none" stroke-width="1" />
<circle cx="128.8" cy="659.6" r="2.4" fill="#1b1b1b" stroke="#d0d0d0" stroke-width="1"/>
<rect x="131.6" y="659.2" width="25.4" height="0.8" fill="#555" />
<path d="M164 662 l3.4 -4.4 l2 2.4 l1.6 -2.4 l3.4 4.4 z" fill="#c0c0c0" stroke="none" stroke-width="1" />
<rect x="112.95" y="478" width="1.1" height="176" fill="#2d8ceb" />
<path d="M110 475.6 h7.2 v3.2 l-3.6 4.8 l-3.6 -4.8 z" fill="#2d8ceb" stroke="none" stroke-width="1" />
<path d="M111.6 565.8000000000001 h4.3 M111.6 571.8000000000001 h4.3" fill="none" stroke="#b9c6d6" stroke-width="1.1" />
<path d="M113.8 565.8000000000001 v6.0" fill="none" stroke="#b9c6d6" stroke-width="1.7" />
<path d="M111.6 578.8700000000001 h4.3 M111.6 584.8700000000001 h4.3" fill="none" stroke="#b9c6d6" stroke-width="1.1" />
<path d="M113.8 578.8700000000001 v6.0" fill="none" stroke="#b9c6d6" stroke-width="1.7" />
<path d="M111.6 591.94 h4.3 M111.6 597.94 h4.3" fill="none" stroke="#b9c6d6" stroke-width="1.1" />
<path d="M113.8 591.94 v6.0" fill="none" stroke="#b9c6d6" stroke-width="1.7" />
<path d="M113.6 604.8100000000001 l2.6 3.2 l-2.6 3.2 l-2.6 -3.2 z" fill="#b9c6d6" stroke="none" stroke-width="1" />
<path d="M111.6 618.08 h4.3 M111.6 624.08 h4.3" fill="none" stroke="#b9c6d6" stroke-width="1.1" />
<path d="M113.8 618.08 v6.0" fill="none" stroke="#b9c6d6" stroke-width="1.7" />
<path d="M111.6 631.1500000000001 h4.3 M111.6 637.1500000000001 h4.3" fill="none" stroke="#b9c6d6" stroke-width="1.1" />
<path d="M113.8 631.1500000000001 v6.0" fill="none" stroke="#b9c6d6" stroke-width="1.7" />
<path d="M111.6 644.22 h4.3 M111.6 650.22 h4.3" fill="none" stroke="#b9c6d6" stroke-width="1.1" />
<path d="M113.8 644.22 v6.0" fill="none" stroke="#b9c6d6" stroke-width="1.7" />
<rect x="0" y="665.1" width="634" height="1.5" fill="#2b62a0" />
<rect x="0" y="666.6" width="634" height="31.2" fill="#eeeeee" />
<rect x="0" y="696.8" width="634" height="1" fill="#f8f8f8" />
<rect x="633" y="666.6" width="0.9" height="31" fill="#f6f6f6" />
<rect x="106.4" y="674.9" width="7.4" height="7.2" fill="#1f8fe6" />
<rect x="114.5" y="674.9" width="7.4" height="7.2" fill="#1f8fe6" />
<rect x="106.4" y="682.8" width="7.4" height="7.2" fill="#1f8fe6" />
<rect x="114.5" y="682.8" width="7.4" height="7.2" fill="#1f8fe6" />
<rect x="130.9" y="672.7" width="142.4" height="19.5" fill="#fbfbfb" rx="9.7" stroke="#dcdcdc" stroke-width="0.7"/>
<circle cx="142.6" cy="681.6" r="3" fill="none" stroke="#333" stroke-width="1.2"/>
<path d="M144.8 684 l2.6 2.8" fill="none" stroke="#333" stroke-width="1.3" />
<text x="154.2" y="685.8" font-size="9.8" fill="#555" font-family="'Liberation Sans','Noto Sans CJK SC',sans-serif" >搜索</text>
<path d="M282.2 676.2 h5.4 l1.6 1.8 h9 v2 h-16 z" fill="#e8a820" stroke="none" stroke-width="1" />
<rect x="282.2" y="678.4" width="16" height="11.2" fill="#f8cc4c" rx="1"/>
<rect x="284.8" y="685" width="10.8" height="4.6" fill="#2a7bd8" rx="0.6"/>
<rect x="288.2" y="693" width="4" height="1.6" fill="#8a8a8a" rx="0.8"/>
<defs><linearGradient id="eg" x1="0" y1="0" x2="1" y2="0.3"><stop offset="0" stop-color="#2aa4e8"/><stop offset="0.55" stop-color="#35c3e8"/><stop offset="1" stop-color="#52d67a"/></linearGradient><linearGradient id="eb" x1="0" y1="0" x2="0" y2="1"><stop offset="0" stop-color="#1a78c8"/><stop offset="1" stop-color="#0a4a98"/></linearGradient></defs>
<circle cx="318.7" cy="682.3" r="8" fill="url(#eg)"/>
<path d="M310.7 681.6999999999999 C310.7 690.9 320.7 692.3 325.7 686.9 C321.7 688.9 316.09999999999997 687.9 315.3 683.9 C314.9 680.9 317.09999999999997 678.9 319.7 678.5 C315.09999999999997 677.3 310.9 679.3 310.7 681.6999999999999 Z" fill="url(#eb)" stroke="none" stroke-width="1" />
<path d="M318.5 683.6999999999999 C318.5 681.9 320.7 680.9 322.5 681.6999999999999 C323.9 682.5 323.9 684.0999999999999 323.09999999999997 684.9 C322.09999999999997 684.0999999999999 319.7 684.3 319.3 685.6999999999999 C318.7 685.0999999999999 318.5 684.5 318.5 683.6999999999999 Z" fill="#e6f3fa" stroke="none" stroke-width="1" />
<circle cx="314.09999999999997" cy="686.6999999999999" r="3.4" fill="#9c9c9c"/><circle cx="314.09999999999997" cy="685.5" r="1.2" fill="#ececec"/>
<path d="M311.9 688.9 a2.2 1.8 0 0 1 4.4 0 z" fill="#ececec" stroke="none" stroke-width="1" />
<rect x="316.7" y="693" width="4" height="1.6" fill="#8a8a8a" rx="0.8"/>
<circle cx="347.5" cy="682.4" r="7.8" fill="#e84335"/>
<path d="M347.5 682.4 L340.75 678.5 A7.8 7.8 0 0 0 347.5 690.2 Z" fill="#34a853" stroke="none" stroke-width="1" />
<path d="M347.5 682.4 L347.5 690.2 A7.8 7.8 0 0 0 354.25 678.5 Z" fill="#fbbc05" stroke="none" stroke-width="1" />
<circle cx="347.5" cy="682.4" r="3.6" fill="#fff"/><circle cx="347.5" cy="682.4" r="2.8" fill="#4285f4"/>
<rect x="345.5" y="693" width="4" height="1.6" fill="#8a8a8a" rx="0.8"/>
<defs><linearGradient id="wg" x1="0" y1="0" x2="0" y2="1"><stop offset="0" stop-color="#2bd67a"/><stop offset="1" stop-color="#14b858"/></linearGradient></defs>
<rect x="368.4" y="673.9" width="16" height="16" fill="url(#wg)" rx="3"/>
<ellipse cx="374.0" cy="680.6" rx="3.9" ry="3.3" fill="#fff"/><ellipse cx="378.79999999999995" cy="683.7" rx="3.3" ry="2.7" fill="#fff" stroke="#1ec465" stroke-width="0.6"/>
<circle cx="372.59999999999997" cy="679.8" r="0.5" fill="#1ec465"/><circle cx="375.2" cy="679.8" r="0.5" fill="#1ec465"/><circle cx="377.79999999999995" cy="683.2" r="0.4" fill="#1ec465"/><circle cx="379.79999999999995" cy="683.2" r="0.4" fill="#1ec465"/>
<defs><linearGradient id="wd" x1="0" y1="0" x2="1" y2="0"><stop offset="0" stop-color="#4cb4f6"/><stop offset="1" stop-color="#7f9af2"/></linearGradient></defs>
<rect x="399.5" y="674.8" width="11.7" height="14.4" fill="#1b5cbe" rx="1.4"/>
<rect x="399.5" y="674.8" width="11.7" height="9.6" fill="#2b86e2" rx="1.4"/>
<rect x="399.5" y="674.8" width="11.7" height="4.9" fill="url(#wd)" rx="1.4"/>
<rect x="397" y="681.2" width="6.8" height="7" fill="#1a4fae" rx="1"/>
<text x="400.4" y="687.2" font-size="5.6" fill="#fff" font-family="'Liberation Sans','Noto Sans CJK SC',sans-serif" text-anchor="middle" style="font-weight:700">W</text>
<circle cx="431.59999999999997" cy="676.8" r="2.5" fill="#7b83eb"/>
<rect x="430.8" y="680" width="8.6" height="8.6" fill="#7b83eb" rx="2"/>
<rect x="425.6" y="679.6" width="8.4" height="8.4" fill="#4b53bc" rx="1"/>
<text x="429.8" y="686.4" font-size="6" fill="#fff" font-family="'Liberation Sans','Noto Sans CJK SC',sans-serif" text-anchor="middle" style="font-weight:700">T</text>
<circle cx="440.4" cy="676.4" r="4.4" fill="#13a10e" stroke="#efefef" stroke-width="0.6"/>
<path d="M438.4 676.4 l1.5 1.5 l2.6 -2.8" fill="none" stroke="#fff" stroke-width="0.9" />
<circle cx="438.4" cy="685.6" r="3.2" fill="#f4e4b0"/>
<rect x="431.4" y="693" width="4" height="1.6" fill="#8a8a8a" rx="0.8"/>
<rect x="454.9" y="674.2" width="15.4" height="15.6" fill="#f2223c" rx="3"/>
<text x="462.6" y="685.4" font-size="10" fill="#fff" font-family="'Liberation Sans','Noto Sans CJK SC',sans-serif" text-anchor="middle" style="font-weight:700" letter-spacing="-0.4">yd</text>
<rect x="460.6" y="693" width="4" height="1.6" fill="#8a8a8a" rx="0.8"/>
<rect x="483.5" y="674.6" width="15.8" height="15.2" fill="#1e1e1e" rx="1.4"/>
<circle cx="489.9" cy="678.6" r="1.6" fill="#f24e1e"/><circle cx="492.9" cy="678.6" r="1.6" fill="#ff7262"/><circle cx="489.9" cy="681.8" r="1.6" fill="#a259ff"/><circle cx="492.9" cy="681.8" r="1.6" fill="#1abcfe"/><circle cx="489.9" cy="685" r="1.6" fill="#0acf83"/>
<rect x="489.4" y="693" width="4" height="1.6" fill="#8a8a8a" rx="0.8"/>
<rect x="508.1" y="669.7" width="24.2" height="24.9" fill="#f9f9f9" rx="2.4" stroke="#e4e4e4" stroke-width="0.6"/>
<rect x="513.2" y="674.8" width="14.2" height="13.6" fill="#00005b" rx="2.2"/>
<text x="520.3" y="685" font-size="8.6" fill="#9999ff" font-family="'Liberation Sans','Noto Sans CJK SC',sans-serif" text-anchor="middle" style="font-weight:700">Ae</text>
<rect x="515.3" y="693" width="10" height="1.6" fill="#6c8088" rx="0.8"/>
<rect x="633.9" y="0" width="2.1" height="700" fill="#707070" />
<rect x="0" y="697.8" width="636" height="2.2" fill="#707070" />
</svg>
</body></html>
